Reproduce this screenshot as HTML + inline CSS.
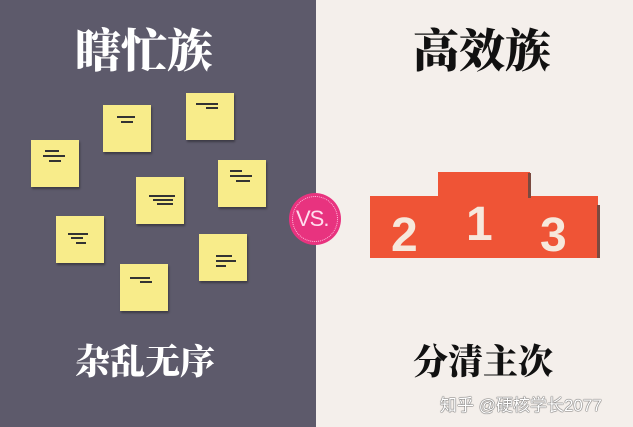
<!DOCTYPE html>
<html><head><meta charset="utf-8"><style>
*{margin:0;padding:0}
body{width:633px;height:427px;overflow:hidden;position:relative;background:#f4efeb;font-family:"Liberation Sans","Noto Serif CJK SC",serif}
#l{position:absolute;left:0;top:0;width:316px;height:427px;background:#5d5a6b}
.t{position:absolute;font-family:"Noto Serif CJK SC",serif;font-weight:900;white-space:nowrap;line-height:1}
.n{position:absolute;width:48px;height:47px;background:#f8ec8a;box-shadow:1px 2px 2px rgba(0,0,0,.35)}
.n i{position:absolute;height:2px;background:#333}
.p{position:absolute;background:#ef5436}
.d{position:absolute;color:#f6e8dc;font:bold 48px "Liberation Sans",sans-serif;line-height:1}
</style></head><body>
<div id="l"></div>
<div class="t" style="left:75px;top:25px;font-size:46px;color:#fff">瞎忙族</div>
<div class="t" style="left:413px;top:25px;font-size:46px;color:#111">高效族</div>
<div class="t" style="left:75px;top:343px;font-size:35px;color:#fff">杂乱无序</div>
<div class="t" style="left:413px;top:343px;font-size:35px;color:#111">分清主次</div>

<div class="n" style="left:31px;top:140px"><i style="left:14px;top:10px;width:14px"></i><i style="left:12px;top:15px;width:22px"></i><i style="left:18px;top:20px;width:12px"></i></div>
<div class="n" style="left:103px;top:105px"><i style="left:14px;top:11px;width:18px"></i><i style="left:18px;top:16px;width:12px"></i></div>
<div class="n" style="left:186px;top:93px"><i style="left:10px;top:10px;width:22px"></i><i style="left:20px;top:14px;width:12px"></i></div>
<div class="n" style="left:218px;top:160px"><i style="left:12px;top:10px;width:12px"></i><i style="left:12px;top:15px;width:22px"></i><i style="left:18px;top:20px;width:14px"></i></div>
<div class="n" style="left:136px;top:177px"><i style="left:13px;top:18px;width:26px"></i><i style="left:17px;top:22px;width:20px"></i><i style="left:21px;top:26px;width:16px"></i></div>
<div class="n" style="left:56px;top:216px"><i style="left:12px;top:17px;width:20px"></i><i style="left:15px;top:21px;width:12px"></i><i style="left:20px;top:26px;width:10px"></i></div>
<div class="n" style="left:199px;top:234px"><i style="left:17px;top:21px;width:16px"></i><i style="left:17px;top:26px;width:20px"></i><i style="left:17px;top:31px;width:10px"></i></div>
<div class="n" style="left:120px;top:264px"><i style="left:10px;top:13px;width:20px"></i><i style="left:20px;top:17px;width:12px"></i></div>

<div style="position:absolute;left:289px;top:193px;width:52px;height:52px;border-radius:50%;background:#e8337f;"></div>
<div style="position:absolute;left:292px;top:196px;border-radius:50%;border:1.5px dotted #fbd;box-sizing:border-box;width:46px;height:46px"></div>
<div style="position:absolute;left:296px;top:206px;color:#fde;font:22px 'Liberation Sans Narrow','Liberation Sans',sans-serif;letter-spacing:-1px">VS.</div>

<div class="p" style="left:370px;top:196px;width:228px;height:62px"></div>
<div class="p" style="left:438px;top:172px;width:92px;height:30px"></div>
<div style="position:absolute;left:528px;top:173px;width:3px;height:25px;background:#7a4a40"></div>
<div style="position:absolute;left:597px;top:205px;width:3px;height:53px;background:#7a4a40"></div>
<div class="d" style="left:391px;top:212px">2</div>
<div class="d" style="left:466px;top:201px">1</div>
<div class="d" style="left:540px;top:212px">3</div>

<div style="position:absolute;left:440px;top:391px;font-size:17px;color:#fff;white-space:nowrap;text-shadow:0 0 1px #555,0 0 1px #555,0 0 1px #555;font-family:'Liberation Sans','Noto Sans CJK SC',sans-serif">知乎 @硬核学长2077</div>
</body></html>
